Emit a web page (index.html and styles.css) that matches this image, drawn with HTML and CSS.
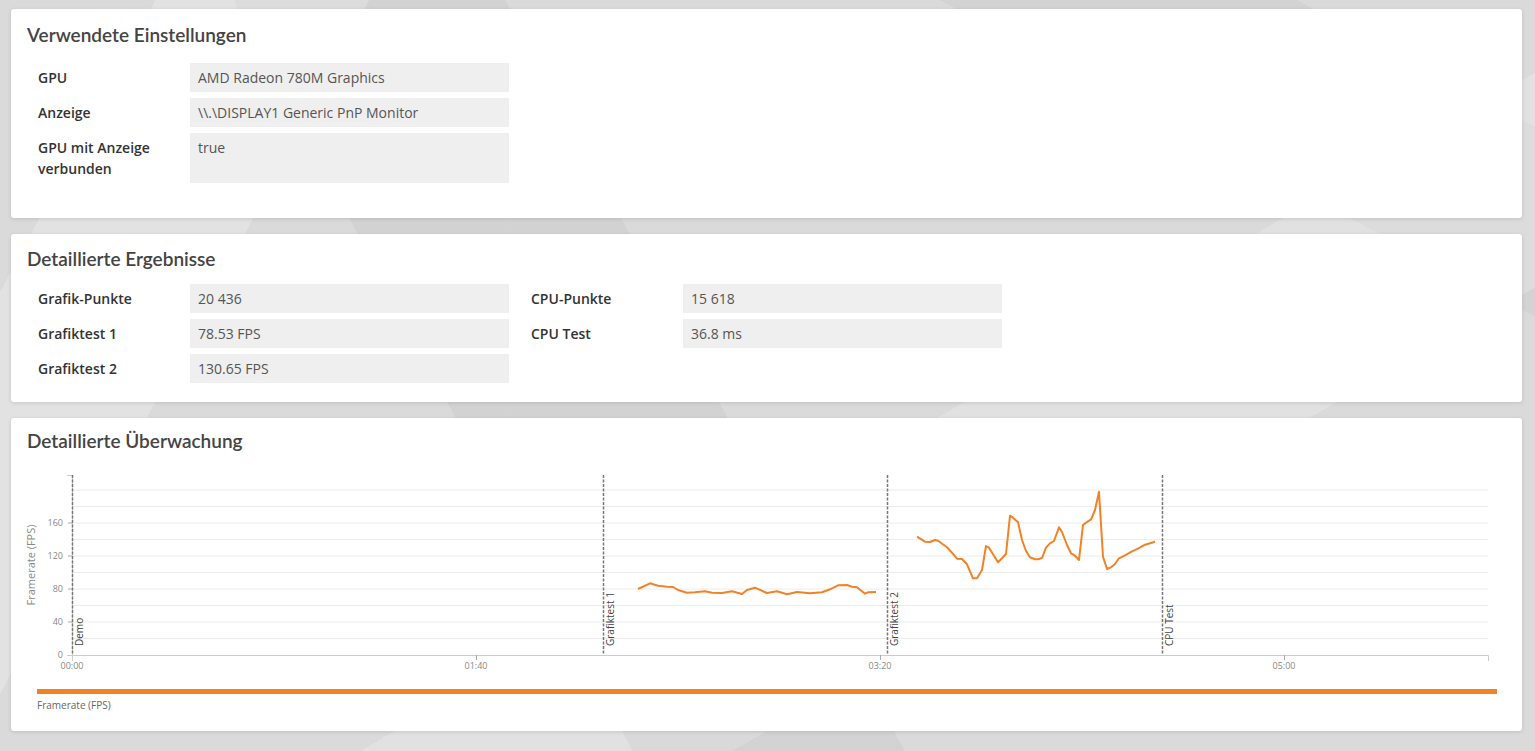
FILE: index.html
```html
<!doctype html>
<html>

<head>
    <meta charset="utf-8">
    <meta name="viewport" content="width=device-width, initial-scale=1">
    <title>Ergebnisse</title>
    <link rel="stylesheet" href="styles.css">
</head>

<body>
    <div class="card card-settings">
        <h2 class="card-title">Verwendete Einstellungen</h2>
        <div class="info-grid">
            <div class="info-col">
                <div class="info-row">
                    <div class="info-label">GPU</div>
                    <div class="info-value">AMD Radeon 780M Graphics</div>
                </div>
                <div class="info-row">
                    <div class="info-label">Anzeige</div>
                    <div class="info-value">\\.\DISPLAY1 Generic PnP Monitor</div>
                </div>
                <div class="info-row">
                    <div class="info-label">GPU mit Anzeige verbunden</div>
                    <div class="info-value">true</div>
                </div>
            </div>
        </div>
    </div>

    <div class="card card-results">
        <h2 class="card-title">Detaillierte Ergebnisse</h2>
        <div class="info-grid">
            <div class="info-col">
                <div class="info-row">
                    <div class="info-label">Grafik-Punkte</div>
                    <div class="info-value">20 436</div>
                </div>
                <div class="info-row">
                    <div class="info-label">Grafiktest 1</div>
                    <div class="info-value">78.53 FPS</div>
                </div>
                <div class="info-row">
                    <div class="info-label">Grafiktest 2</div>
                    <div class="info-value">130.65 FPS</div>
                </div>
            </div>
            <div class="info-col">
                <div class="info-row">
                    <div class="info-label">CPU-Punkte</div>
                    <div class="info-value">15 618</div>
                </div>
                <div class="info-row">
                    <div class="info-label">CPU Test</div>
                    <div class="info-value">36.8 ms</div>
                </div>
            </div>
        </div>
    </div>

    <div class="card card-monitor">
        <h2 class="card-title">Detaillierte Überwachung</h2>
        <svg class="chart" width="1479" height="222" viewBox="0 0 1479 222">
            <g transform="translate(-27,-453)">
                <!-- grid, every 20 fps -->
                <g class="grid">
                    <line x1="72" x2="1488" y1="638.5" y2="638.5"/>
                    <line x1="72" x2="1488" y1="622" y2="622"/>
                    <line x1="72" x2="1488" y1="605.5" y2="605.5"/>
                    <line x1="72" x2="1488" y1="589" y2="589"/>
                    <line x1="72" x2="1488" y1="572.5" y2="572.5"/>
                    <line x1="72" x2="1488" y1="556" y2="556"/>
                    <line x1="72" x2="1488" y1="539.5" y2="539.5"/>
                    <line x1="72" x2="1488" y1="523" y2="523"/>
                    <line x1="72" x2="1488" y1="506.5" y2="506.5"/>
                    <line x1="72" x2="1488" y1="490" y2="490"/>
                </g>

                <!-- y axis -->
                <path class="axis" d="M67,475.5H72.5V655.5H67"/>
                <g class="tick">
                    <line x1="68" x2="72" y1="523" y2="523"/>
                    <line x1="68" x2="72" y1="556" y2="556"/>
                    <line x1="68" x2="72" y1="589" y2="589"/>
                    <line x1="68" x2="72" y1="622" y2="622"/>
                </g>
                <g class="tick-label" text-anchor="end">
                    <text x="63" y="526">160</text>
                    <text x="63" y="559">120</text>
                    <text x="63" y="592">80</text>
                    <text x="63" y="625">40</text>
                    <text x="63" y="658">0</text>
                </g>
                <text class="axis-title" transform="rotate(-90 35 565)" x="35" y="565" text-anchor="middle">Framerate (FPS)</text>

                <!-- x axis -->
                <path class="axis" d="M72.5,661V655.5H1488.5V661"/>
                <g class="tick">
                    <line x1="476.5" x2="476.5" y1="655" y2="660"/>
                    <line x1="880.5" x2="880.5" y1="655" y2="660"/>
                    <line x1="1284.5" x2="1284.5" y1="655" y2="660"/>
                </g>
                <g class="tick-label" text-anchor="middle">
                    <text x="72" y="669">00:00</text>
                    <text x="476" y="669">01:40</text>
                    <text x="880" y="669">03:20</text>
                    <text x="1284" y="669">05:00</text>
                </g>

                <!-- test sections -->
                <g class="marker">
                    <line x1="72.5" x2="72.5" y1="475" y2="655"/>
                    <line x1="603.5" x2="603.5" y1="475" y2="655"/>
                    <line x1="887.5" x2="887.5" y1="475" y2="655"/>
                    <line x1="1162.5" x2="1162.5" y1="475" y2="655"/>
                </g>
                <g class="marker-label">
                    <text transform="rotate(-90 83 646)" x="83" y="646">Demo</text>
                    <text transform="rotate(-90 614 646)" x="614" y="646">Grafiktest 1</text>
                    <text transform="rotate(-90 898 646)" x="898" y="646">Grafiktest 2</text>
                    <text transform="rotate(-90 1173 646)" x="1173" y="646">CPU Test</text>
                </g>

                <!-- framerate -->
                <polyline class="series" points="638,589 650,583.3 658,585.7 667,586.7 673,587 678,590 687,592.7 695,592.3 705,591.3 712,592.7 722,593 732,591.3 742,594 747,590 755,587.7 767,593 777,591.3 787,594.3 797,592 810,593.3 822,592.3 830,589.3 838,585.3 847,585 852,586.7 857,587.3 865,593.7 868,592.3 876,592"/>
                <polyline class="series" points="917,536.7 925,541.7 930,542 935,540 938,540.7 947,547.3 952,552.7 957,558.7 962,559 967,564.3 973,578.3 977,578.3 982,570 986,546 989,547.7 998,562.3 1002,558.3 1006,554 1010,515.7 1013,517.7 1018,522.3 1022,540 1026,551 1030,557.3 1035,559.3 1038,559.3 1042,558 1046,547.7 1050,543.3 1054,541 1059,527.3 1062,532 1067,545 1071,553.3 1075,555.7 1079,560 1083,525 1087,522 1091,519.3 1095,510 1099,491.7 1103,556.7 1107,569 1111,567.3 1115,564 1119,558.3 1125,555.3 1132,551.3 1138,548.7 1145,544.7 1150,543.3 1155,541.7"/>
            </g>
        </svg>
        <div class="legend">
            <div class="legend-bar"></div>
            <div class="legend-text">Framerate (FPS)</div>
        </div>
    </div>
</body>

</html>
```

FILE: styles.css
```css
body {
    margin: 0;
    padding: 9px 13px 20px 11px;
    font-family: 'Open Sans', sans-serif;
    color: #333;
    background-color: #dadada;
    background-image:
        linear-gradient(118deg, transparent 0 8%, rgba(255, 255, 255, 0.22) 8% 19%, transparent 19% 100%),
        linear-gradient(62deg, transparent 0 33%, rgba(0, 0, 0, 0.035) 33% 47%, transparent 47% 100%),
        linear-gradient(150deg, transparent 0 58%, rgba(255, 255, 255, 0.2) 58% 71%, transparent 71% 100%),
        linear-gradient(28deg, transparent 0 80%, rgba(0, 0, 0, 0.03) 80% 92%, transparent 92% 100%);
    min-height: 100vh;
    box-sizing: border-box;
}

.card {
    background: #fff;
    border-radius: 3px;
    box-shadow: 0 1px 4px rgba(0, 0, 0, 0.12);
    padding: 14px 16px 35px;
    margin-bottom: 16px;
}

.card-title {
    margin: 0;
    font-family: 'Lato', sans-serif;
    font-weight: 600;
    font-size: 19px;
    line-height: 24px;
    color: #444;
}

.card-settings .info-grid {
    margin-top: 16px;
}

.card-results {
    padding-top: 13px;
    padding-bottom: 19px;
}

.card-results .info-grid {
    margin-top: 13px;
}

.card-monitor {
    padding-top: 11px;
    padding-bottom: 19px;
}

.info-grid {
    display: flex;
    gap: 22px;
    padding-left: 11px;
}

.info-col {
    display: flex;
    flex-direction: column;
    gap: 6px;
    width: 471px;
}

.info-row {
    display: flex;
}

.info-label {
    width: 152px;
    flex-shrink: 0;
    padding: 4px 20px 4px 0;
    box-sizing: border-box;
    font-size: 14px;
    font-weight: 600;
    line-height: 21px;
    color: #333;
}

.info-value {
    flex: 1;
    background: #efefef;
    padding: 4px 8px;
    font-size: 14px;
    line-height: 21px;
    color: #555;
}

.chart {
    display: block;
    overflow: visible;
}

.chart .grid line {
    stroke: #ececec;
    stroke-width: 1;
}

.chart .axis {
    fill: none;
    stroke: #ccc;
    stroke-width: 1;
}

.chart .tick line {
    stroke: #aaa;
    stroke-width: 1;
}

.chart .tick-label {
    font-size: 9px;
    fill: #888;
}

.chart .axis-title {
    font-size: 11px;
    fill: #888;
}

.chart .marker line {
    stroke: #777;
    stroke-width: 1.5;
    stroke-dasharray: 3 1.5;
}

.chart .marker-label {
    font-size: 10px;
    fill: #444;
}

.chart .series {
    fill: none;
    stroke: #f28226;
    stroke-width: 2;
    stroke-linejoin: round;
}

.legend {
    margin: 14px 9px 0 10px;
}

.legend-bar {
    height: 5px;
    background: #f28226;
}

.legend-text {
    margin-top: 4px;
    font-size: 10px;
    line-height: 14px;
    color: #666;
}
```
